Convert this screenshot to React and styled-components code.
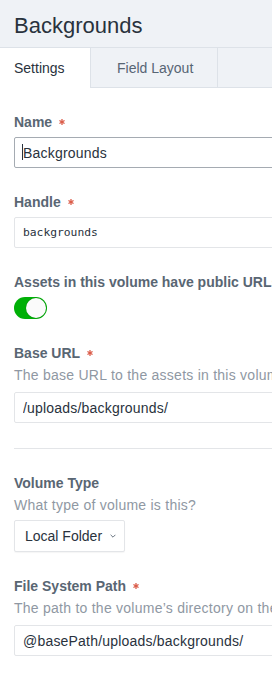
import React from 'react';
import styled, { createGlobalStyle } from 'styled-components';

const Global = createGlobalStyle`
  html, body { margin: 0; padding: 0; background: #fff; overflow: hidden; }
  body {
    font-family: "Liberation Sans", Arial, sans-serif;
    color: #29323d;
    -webkit-font-smoothing: antialiased;
  }
  * { box-sizing: border-box; }
`;

const Page = styled.div`
  width: 272px;
  overflow: hidden;
`;

const Header = styled.header`
  height: 47px;
  background: #eff2f6;
  padding: 13px 14px 0;
`;

const Title = styled.h1`
  margin: 0;
  font-size: 22px;
  line-height: 26px;
  font-weight: 400;
  color: #29323d;
  white-space: nowrap;
`;

const TabBar = styled.nav`
  display: flex;
  height: 41px;
  background: #eff2f6;
  border-top: 1px solid #dde2e8;
`;

const Tab = styled.div`
  flex: 0 0 ${p => p.$width}px;
  height: 40px;
  display: flex;
  align-items: center;
  padding-left: ${p => p.$pad}px;
  font-size: 14px;
  white-space: nowrap;
  background: ${p => (p.$active ? '#fff' : '#eff2f6')};
  color: ${p => (p.$active ? '#29323d' : '#576574')};
  border-bottom: ${p => (p.$active ? 'none' : '1px solid #dde2e8')};
  border-right: 1px solid #dde2e8;
`;

const TabFill = styled.div`
  flex: 1;
  height: 40px;
  border-bottom: 1px solid #dde2e8;
`;

const Content = styled.main`
  width: 460px;
  padding: 24px 0 0 14px;
`;

const Field = styled.section`
  margin-bottom: 24px;
`;

const Heading = styled.div`
  display: flex;
  align-items: center;
  height: 20px;
  margin-bottom: ${p => (p.$withInstructions ? 2 : 5)}px;
  font-size: 14px;
  line-height: 20px;
  font-weight: 700;
  color: #596673;
  white-space: nowrap;
`;

const Star = styled.svg`
  margin-left: 7px;
  flex: none;
`;

const Instructions = styled.p`
  margin: 0 0 ${p => p.$gap}px;
  font-size: 14px;
  line-height: 20px;
  letter-spacing: 0.25px;
  color: #8f98a3;
  white-space: nowrap;
`;

const InputWrap = styled.div`
  position: relative;
`;

const TextInput = styled.input`
  display: block;
  width: 100%;
  height: 31px;
  margin: 0;
  padding: 0 8px;
  border: 1px solid ${p => (p.$focused ? '#a5abb2' : '#e3e5e8')};
  border-radius: 2px;
  background: #fff;
  color: #29323d;
  font-family: ${p => (p.$mono ? '"DejaVu Sans Mono", "Liberation Mono", monospace' : '"Liberation Sans", Arial, sans-serif')};
  font-size: ${p => (p.$mono ? '11.3px' : '14px')};
  letter-spacing: ${p => (p.$mono ? '0' : '0.2px')};
  line-height: 20px;
  outline: none;
`;

const Caret = styled.span`
  position: absolute;
  left: 8px;
  top: 7px;
  width: 1px;
  height: 16px;
  background: #29323d;
`;

const Switch = styled.div`
  width: 33px;
  height: 22px;
  border-radius: 11px;
  background: #00b007;
  display: flex;
  align-items: center;
  justify-content: flex-end;
  padding: 1px;
`;

const Knob = styled.span`
  width: 20px;
  height: 20px;
  border-radius: 50%;
  background: #fbfbfb;
  box-shadow: 0 0 0 0.5px rgba(0, 0, 0, 0.15);
`;

const Rule = styled.hr`
  margin: 25px 0 24px;
  border: 0;
  border-top: 1px solid #e3e5e8;
  height: 0;
`;

const SelectBtn = styled.div`
  display: inline-flex;
  align-items: center;
  gap: 8px;
  height: 32px;
  padding: 0 8px 0 10px;
  border: 1px solid #e3e5e8;
  border-radius: 2px;
  background: #fff;
  box-shadow: 0 1px 1px rgba(0, 0, 0, 0.04);
  font-size: 14px;
  line-height: 20px;
  color: #29323d;
  white-space: nowrap;
`;

const Required = () => (
  <Star width="6" height="6" viewBox="0 0 6 6">
    <g stroke="#da5a47" strokeWidth="1.3" strokeLinecap="round">
      <line x1="3" y1="0.6" x2="3" y2="5.4" />
      <line x1="0.9" y1="1.8" x2="5.1" y2="4.2" />
      <line x1="0.9" y1="4.2" x2="5.1" y2="1.8" />
    </g>
  </Star>
);

const Chevron = () => (
  <svg width="6" height="4" viewBox="0 0 6 4">
    <path d="M0.6 0.8 L3 3.2 L5.4 0.8" fill="none" stroke="#6b7682" strokeWidth="1" />
  </svg>
);

export default function App() {
  return (
    <>
      <Global />
      <Page>
        <Header>
          <Title>Backgrounds</Title>
        </Header>
        <TabBar>
          <Tab $active $width={91} $pad={14}>Settings</Tab>
          <Tab $width={127} $pad={26}>Field Layout</Tab>
          <TabFill />
        </TabBar>
        <Content>
          <Field>
            <Heading>Name<Required /></Heading>
            <InputWrap>
              <TextInput $focused defaultValue="Backgrounds" />
              <Caret />
            </InputWrap>
          </Field>
          <Field>
            <Heading>Handle<Required /></Heading>
            <TextInput $mono defaultValue="backgrounds" />
          </Field>
          <Field>
            <Heading>Assets in this volume have public URLs</Heading>
            <Switch><Knob /></Switch>
          </Field>
          <Field>
            <Heading $withInstructions>Base URL<Required /></Heading>
            <Instructions $gap={7}>The base URL to the assets in this volume.</Instructions>
            <TextInput defaultValue="/uploads/backgrounds/" />
          </Field>
          <Rule />
          <Field>
            <Heading $withInstructions>Volume Type</Heading>
            <Instructions $gap={5}>What type of volume is this?</Instructions>
            <SelectBtn>Local Folder<Chevron /></SelectBtn>
          </Field>
          <Field>
            <Heading $withInstructions>File System Path<Required /></Heading>
            <Instructions $gap={7}>The path to the volume’s directory on the file system.</Instructions>
            <TextInput defaultValue="@basePath/uploads/backgrounds/" />
          </Field>
        </Content>
      </Page>
    </>
  );
}
